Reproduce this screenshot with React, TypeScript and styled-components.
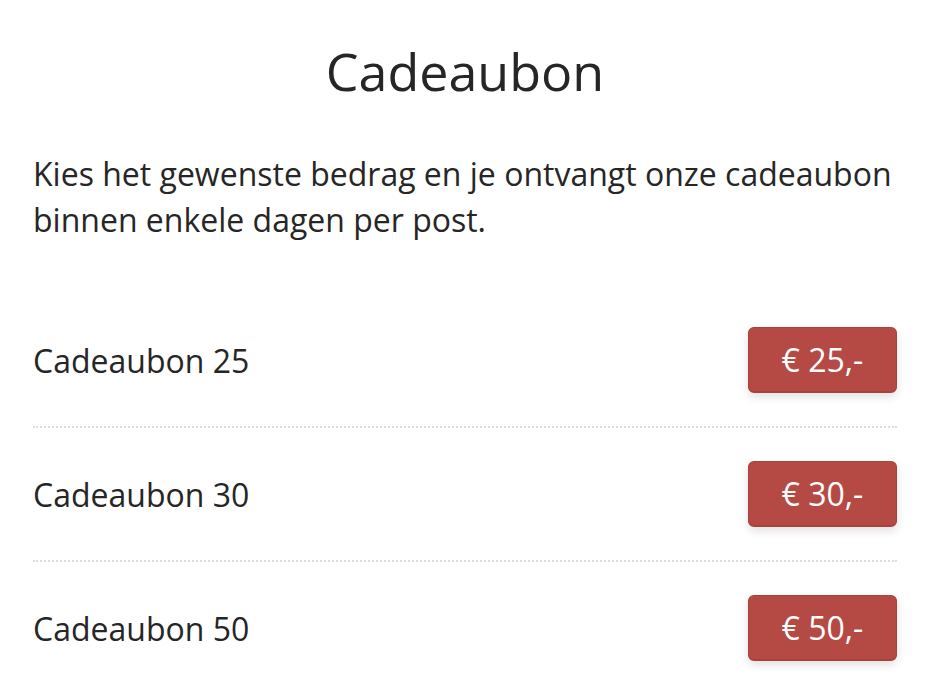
import React from "react";
import styled, { createGlobalStyle } from "styled-components";

const GlobalStyle = createGlobalStyle`
  html, body {
    margin: 0;
    padding: 0;
    background: #ffffff;
  }
  body {
    font-family: "Open Sans", "Noto Sans", sans-serif;
    color: #262626;
  }
`;

const Page = styled.main`
  padding: 40px 31px 0 33px;
`;

const Title = styled.h1`
  margin: 0;
  text-align: center;
  font-size: 52px;
  font-weight: 400;
  line-height: 1.2;
  color: #262626;
`;

const Intro = styled.p`
  margin: 49px 0 0;
  font-size: 32px;
  line-height: 46px;
  color: #262626;
`;

const List = styled.ul`
  list-style: none;
  margin: 51px 0 0;
  padding: 0;
`;

const Row = styled.li`
  display: flex;
  align-items: center;
  justify-content: space-between;
  padding: 33px 0;
  border-bottom: 2px dotted #dcdcdc;

  &:last-child {
    border-bottom: none;
  }
`;

const Label = styled.span`
  font-size: 32px;
  color: #262626;
`;

const PriceButton = styled.button`
  width: 149px;
  height: 66px;
  border: 1px solid #a8423d;
  border-bottom-width: 2px;
  border-radius: 6px;
  background: #b54a44;
  color: #ffffff;
  font-family: "Open Sans", "Noto Sans", sans-serif;
  font-size: 32px;
  box-shadow: 0 4px 10px rgba(0, 0, 0, 0.12);
  cursor: pointer;
`;

const items = [
  { label: "Cadeaubon 25", price: "€ 25,-" },
  { label: "Cadeaubon 30", price: "€ 30,-" },
  { label: "Cadeaubon 50", price: "€ 50,-" },
];

export default function App() {
  return (
    <>
      <GlobalStyle />
      <Page>
        <Title>Cadeaubon</Title>
        <Intro>
          Kies het gewenste bedrag en je ontvangt onze cadeaubon binnen enkele
          dagen per post.
        </Intro>
        <List>
          {items.map((item) => (
            <Row key={item.label}>
              <Label>{item.label}</Label>
              <PriceButton>{item.price}</PriceButton>
            </Row>
          ))}
        </List>
      </Page>
    </>
  );
}
